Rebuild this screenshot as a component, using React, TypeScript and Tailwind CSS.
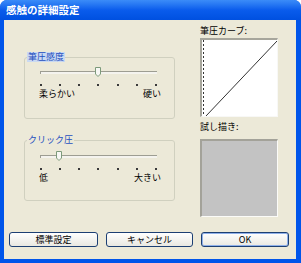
import React from 'react';

const font = { fontFamily: '"Noto Sans CJK JP", "Liberation Sans", sans-serif' };

// horizontal trackbar with tick marks and end labels
function Trackbar({ pos, low, high }: { pos: number; low: string; high: string }) {
  const ticks = [0, 1, 2, 3, 4, 5, 6];
  return (
    <div className="ml-[14px] w-[122px]">
      <div className="relative ml-[1px] h-[10px] w-[117px]">
        <div className="absolute left-0 right-0 top-[4px] h-[3px] border-t border-l border-[#9d9d92] border-b-white border-r-white bg-[#f4f3ee]" />
        <div
          className="absolute top-0 h-[10px] w-[6px]"
          style={{ left: pos * 19.3 - 3 }}
        >
          <svg width="6" height="10" viewBox="0 0 6 10">
            <path d="M0.5 0.5 H5.5 V7 L3 9.5 L0.5 7 Z" fill="#f7f7f4" stroke="#7c9a7a" strokeWidth="1" />
          </svg>
        </div>
      </div>
      <div className="ml-[1px] mt-[7px] flex w-[117px] justify-between">
        {ticks.map((t) => (
          <div key={t} className="h-[2px] w-[2px] bg-[#3a3a3a]" />
        ))}
      </div>
      <div className="mt-[3px] flex justify-between text-[9px] leading-[10px] text-black">
        <span>{low}</span>
        <span>{high}</span>
      </div>
    </div>
  );
}

export default function App() {
  return (
    <div className="h-[263px] w-[301px] overflow-hidden rounded-t-[7px] bg-[#0055ea] flex flex-col" style={font}>
      {/* Title bar */}
      <div className="h-[20px] shrink-0 bg-gradient-to-b from-[#3b8cf8] via-[#0a5cec] to-[#0050e0] pl-[6px] flex items-center">
        <span className="text-[10.5px] font-bold leading-none text-white">感触の詳細設定</span>
      </div>

      {/* Client area */}
      <div className="ml-[4px] mr-[5px] mb-[4px] flex-1 bg-[#ece9d8] flex flex-col">
        <div className="flex h-[212px]">
          {/* Left: group boxes */}
          <div className="pl-[20px] pt-[32px]">
            <fieldset className="h-[67px] w-[151px] rounded-[3px] border border-[#d0d0bf]">
              <legend className="ml-[2px] bg-[#c9d9f2] px-[1px] text-[9px] leading-[10px] text-[#1f4fbf]">筆圧感度</legend>
              <div className="pt-[5px]">
                <Trackbar pos={3} low="柔らかい" high="硬い" />
              </div>
            </fieldset>
            <fieldset className="mt-[16px] h-[66px] w-[151px] rounded-[3px] border border-[#d0d0bf]">
              <legend className="ml-[2px] px-[1px] text-[9px] leading-[10px] text-[#1f4fbf]">クリック圧</legend>
              <div className="pt-[6px]">
                <Trackbar pos={1} low="低" high="大きい" />
              </div>
            </fieldset>
          </div>

          {/* Right: curve + test area */}
          <div className="ml-[25px] pt-[6px]">
            <div className="text-[9px] leading-[10px] text-black">筆圧カーブ:</div>
            <div className="mt-[2px] h-[79px] w-[78px] border-t-2 border-l-2 border-[#a7a69c] border-b border-r border-b-[#f8f8f6] border-r-[#f8f8f6] bg-white">
              <svg width="75" height="76" viewBox="0 0 75 76">
                <line x1="1.5" y1="0" x2="1.5" y2="76" stroke="#333" strokeWidth="1" strokeDasharray="2 2" />
                <path d="M4 76 L40 38 L75 1" fill="none" stroke="#333" strokeWidth="1" />
              </svg>
            </div>
            <div className="mt-[5px] text-[9px] leading-[10px] text-black">試し描き:</div>
            <div className="mt-[7px] h-[78px] w-[78px] border-t-2 border-l-2 border-[#a3a299] border-b border-r border-b-[#fbfbf8] border-r-[#fbfbf8] bg-[#c3c3c3]" />
          </div>
        </div>

        {/* Buttons */}
        <div className="flex gap-[8px] pl-[5px]">
          <button className="h-[15px] w-[89px] rounded-[3px] border border-[#1c3f73] bg-gradient-to-b from-white to-[#e9e8e1] text-[9px] leading-none text-black">
            標準設定
          </button>
          <button className="h-[15px] w-[87px] rounded-[3px] border border-[#1c3f73] bg-gradient-to-b from-white to-[#e9e8e1] text-[9px] leading-none text-black">
            キャンセル
          </button>
          <button className="h-[15px] w-[88px] rounded-[3px] border border-[#1c3f73] bg-gradient-to-b from-white to-[#e9e8e1] text-[9px] leading-none text-black shadow-[inset_0_0_0_1px_#8fb0ea]">
            OK
          </button>
        </div>
      </div>
    </div>
  );
}
